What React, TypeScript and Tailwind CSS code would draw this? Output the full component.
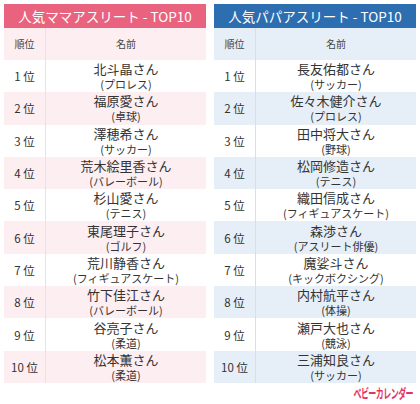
import React from "react";

type Row = { name: string; sport: string };

const mama: Row[] = [
  { name: "北斗晶さん", sport: "(プロレス)" },
  { name: "福原愛さん", sport: "(卓球)" },
  { name: "澤穂希さん", sport: "(サッカー)" },
  { name: "荒木絵里香さん", sport: "(バレーボール)" },
  { name: "杉山愛さん", sport: "(テニス)" },
  { name: "東尾理子さん", sport: "(ゴルフ)" },
  { name: "荒川静香さん", sport: "(フィギュアスケート)" },
  { name: "竹下佳江さん", sport: "(バレーボール)" },
  { name: "谷亮子さん", sport: "(柔道)" },
  { name: "松本薫さん", sport: "(柔道)" },
];

const papa: Row[] = [
  { name: "長友佑都さん", sport: "(サッカー)" },
  { name: "佐々木健介さん", sport: "(プロレス)" },
  { name: "田中将大さん", sport: "(野球)" },
  { name: "松岡修造さん", sport: "(テニス)" },
  { name: "織田信成さん", sport: "(フィギュアスケート)" },
  { name: "森渉さん", sport: "(アスリート俳優)" },
  { name: "魔娑斗さん", sport: "(キックボクシング)" },
  { name: "内村航平さん", sport: "(体操)" },
  { name: "瀬戸大也さん", sport: "(競泳)" },
  { name: "三浦知良さん", sport: "(サッカー)" },
];

function RankTable({ title, rows, blue }: { title: string; rows: Row[]; blue?: boolean }) {
  const head = blue ? "bg-[#2d6eb1]" : "bg-[#e9637f]";
  const stripe = blue ? "bg-[#e6eef8]" : "bg-[#fdeef2]";
  const line = blue ? "border-[#d3e0ee]" : "border-[#f3dce2]";

  return (
    <div className="w-[202px] flex flex-col">
      <div className={`${head} h-[24px] flex items-center justify-center text-white text-[13.5px] leading-[16px] whitespace-nowrap`}>
        {title}
      </div>
      <div className={`${stripe} h-[32px] flex text-[10px] leading-[12px] text-[#444]`}>
        <div className={`w-[42px] border-r ${line} flex items-center justify-center`}>順位</div>
        <div className="flex-1 flex items-center justify-center">名前</div>
      </div>
      {rows.map((r, i) => (
        <div key={i} className={`${i % 2 === 1 ? stripe : "bg-white"} h-[32.3px] flex text-[#333]`}>
          <div className={`w-[42px] border-r ${line} flex items-center justify-center text-[11.5px] leading-[14px]`}>
            {i + 1}&nbsp;位
          </div>
          <div className="flex-1 flex flex-col items-center justify-center whitespace-nowrap">
            <div className="text-[13px] leading-[16px]">{r.name}</div>
            <div className="text-[11px] leading-[14px]">{r.sport}</div>
          </div>
        </div>
      ))}
    </div>
  );
}

export default function App() {
  return (
    <div
      className="w-[420px] h-[404px] bg-white"
      style={{ fontFamily: '"Noto Sans CJK JP", "Noto Sans", sans-serif' }}
    >
      <div className="flex gap-[8px] pl-[4px] pt-[4px]">
        <RankTable title="人気ママアスリート - TOP10" rows={mama} />
        <RankTable title="人気パパアスリート - TOP10" rows={papa} blue />
      </div>
      <div className="flex justify-end pr-[7px] mt-[2px]">
        <span className="inline-block origin-right scale-x-[0.62] text-[#e5325f] text-[13px] font-bold leading-[15px] tracking-[-1px] whitespace-nowrap">
          ベビーカレンダー
        </span>
      </div>
    </div>
  );
}
